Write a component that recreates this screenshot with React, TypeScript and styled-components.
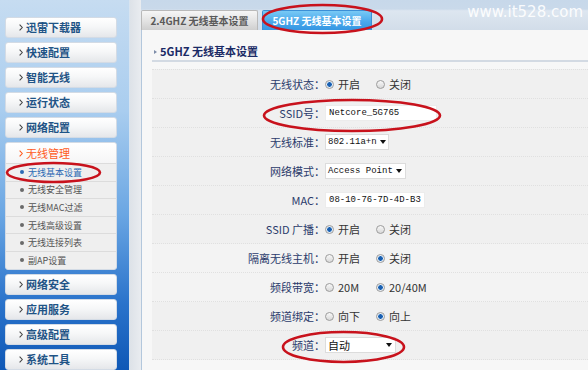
import styled, { createGlobalStyle } from "styled-components";

const CJK = `"Noto Sans CJK SC", "Liberation Sans", sans-serif`;
const MONO = `"Liberation Mono", "DejaVu Sans Mono", monospace`;

const GlobalStyle = createGlobalStyle`
  html, body { margin: 0; padding: 0; }
  body {
    width: 588px;
    height: 370px;
    overflow: hidden;
    background: #f7f7f7;
    font-family: ${CJK};
  }
`;

const Page = styled.div`
  position: relative;
  display: flex;
  width: 588px;
  height: 370px;
  overflow: hidden;
`;

const Sidebar = styled.nav`
  width: 130px;
  flex: none;
  box-sizing: border-box;
  padding: 17px 12px 0 5px;
  display: flex;
  flex-direction: column;
  gap: 4px;
  background: linear-gradient(#c6dcf1 0%, #a9cdef 30%, #6aa6e3 58%, #2a73cb 82%, #0f58b6 100%);
  border-right: 1px solid #d8e4f0;
`;

const MenuButton = styled.div`
  height: 21px;
  flex: none;
  box-sizing: border-box;
  display: flex;
  align-items: center;
  gap: 3px;
  padding-left: 13px;
  border: 1px solid #d3dbe5;
  border-radius: 3px;
  background: linear-gradient(#ffffff, #f6f7f8 45%, #e5e7ea);
  font: bold 11px/1 ${CJK};
  color: #1f5486;
`;

const Group = styled.div`
  flex: none;
  border: 1px solid #d3dbe5;
  border-radius: 3px;
  overflow: hidden;
  background: #efefef;
`;

const GroupHeader = styled.div`
  height: 20px;
  display: flex;
  align-items: center;
  gap: 3px;
  padding-left: 13px;
  background: linear-gradient(#ffffff, #f5f5f6);
  font: 11px/1 ${CJK};
  color: #ff5a1c;
`;

const SubItem = styled.div<{ $active?: boolean }>`
  height: 17.6px;
  box-sizing: border-box;
  display: flex;
  align-items: center;
  padding-left: 14px;
  border-top: 1px solid #dcdcdc;
  font: 9px/1 ${CJK};
  color: ${(p) => (p.$active ? "#2d6ab4" : "#555")};
  &::before {
    content: "";
    width: 4px;
    height: 4px;
    border-radius: 50%;
    margin-right: 4px;
    background: ${(p) => (p.$active ? "#2d6ab4" : "#6a6a6a")};
  }
`;

const Gutter = styled.div`
  width: 11px;
  flex: none;
  background: linear-gradient(to right, #dde2e8, #e9ecf0);
`;

const Main = styled.div`
  flex: 1;
  display: flex;
  flex-direction: column;
  min-width: 0;
`;

const TabBar = styled.div`
  height: 30px;
  flex: none;
  box-sizing: border-box;
  display: flex;
  align-items: flex-end;
  gap: 4px;
  background: linear-gradient(#c7d8ea 0%, #c9d9ea 30%, #dde6f0 36%, #d2dde9 100%);
`;

const Tab = styled.div<{ $active?: boolean }>`
  height: 20px;
  width: ${(p) => (p.$active ? "110px" : "117px")};
  box-sizing: border-box;
  display: flex;
  align-items: center;
  justify-content: center;
  border: 1px solid ${(p) => (p.$active ? "#3b8fd6" : "#b9b9b9")};
  border-bottom: none;
  border-radius: 2px 2px 0 0;
  background: ${(p) =>
    p.$active
      ? "linear-gradient(#78c9f5, #4aa8ec 55%, #3596e2)"
      : "linear-gradient(#f6f6f6, #e2e2e2 55%, #cfcfcf)"};
  font: bold 10px/1 ${CJK};
  color: ${(p) => (p.$active ? "#ffffff" : "#5a5a5a")};
`;

const Watermark = styled.div`
  position: absolute;
  top: 5px;
  right: 5px;
  font: 15px/1 "DejaVu Sans", sans-serif;
  color: rgba(255, 255, 255, 0.92);
`;

const Panel = styled.div`
  flex: 1;
  box-sizing: border-box;
  padding-left: 10px;
  border-left: 1px solid #b3c7dc;
  background: #f7f7f7;
`;

const Title = styled.div`
  margin-top: 13px;
  height: 17px;
  display: flex;
  align-items: center;
  gap: 3px;
  padding-left: 2px;
  border-bottom: 2px solid #d3dae3;
  font: bold 11px/1 ${CJK};
  color: #1b2b66;
  &::before {
    content: "";
    border-left: 3px solid #7d8ca8;
    border-top: 2.5px solid transparent;
    border-bottom: 2.5px solid transparent;
  }
`;

const Form = styled.div`
  margin-top: 7px;
  border-top: 1px dotted #e0e0e0;
  background: #f0f0f0;
`;

const Row = styled.div<{ $light?: boolean }>`
  height: 29px;
  box-sizing: border-box;
  display: flex;
  align-items: center;
  border-bottom: 1px dotted #e0e0e0;
  background: ${(p) => (p.$light ? "#f3f3f3" : "transparent")};
`;

const Label = styled.div`
  width: 173px;
  flex: none;
  text-align: right;
  font: 11px/1 ${CJK};
  color: #2b3b6b;
`;

const Option = styled.div`
  width: 51px;
  display: flex;
  align-items: center;
  gap: 4px;
  font: 11px/1 ${CJK};
  color: #333;
`;

const Radio = styled.span<{ $on?: boolean }>`
  width: 9px;
  height: 9px;
  flex: none;
  box-sizing: border-box;
  border-radius: 50%;
  border: 1px solid #9c9c9c;
  background: ${(p) =>
    p.$on
      ? "radial-gradient(circle, #1a5fb0 0 2px, #7fb0e0 2.3px, #e9eef4 3px)"
      : "linear-gradient(#f8f8f8, #d8d8d8)"};
`;

const TextBox = styled.div<{ $w: number }>`
  width: ${(p) => p.$w}px;
  height: 16px;
  box-sizing: border-box;
  display: flex;
  align-items: center;
  padding-left: 3px;
  background: #ffffff;
  border: 1px solid #ececec;
  font: 9px/1 ${MONO};
  color: #111;
`;

const Select = styled.div<{ $w: number; $cjk?: boolean }>`
  width: ${(p) => p.$w}px;
  height: 16px;
  box-sizing: border-box;
  display: flex;
  align-items: center;
  justify-content: space-between;
  gap: 3px;
  padding: 0 3px 0 2px;
  background: #ffffff;
  border: 1px solid #dcdcdc;
  font: ${(p) => (p.$cjk ? `11px/1 ${CJK}` : `9px/1 ${MONO}`)};
  color: #111;
  white-space: nowrap;
  &::after {
    content: "";
    flex: none;
    border-top: 4px solid #111;
    border-left: 3px solid transparent;
    border-right: 3px solid transparent;
  }
`;

const Marks = styled.svg`
  position: absolute;
  inset: 0;
  pointer-events: none;
`;

const Chevron = ({ color }: { color: string }) => (
  <svg width="4" height="7" viewBox="0 0 4 7">
    <path d="M0.6 0.6 L3.3 3.5 L0.6 6.4" fill="none" stroke={color} strokeWidth="1.1" />
  </svg>
);

const topItems = ["迅雷下载器", "快速配置", "智能无线", "运行状态", "网络配置"];
const subItems = ["无线基本设置", "无线安全管理", "无线MAC过滤", "无线高级设置", "无线连接列表", "副AP设置"];
const bottomItems = ["网络安全", "应用服务", "高级配置", "系统工具"];

const RadioRow = ({ label, a, b, on, light }: { label: string; a: string; b: string; on: 0 | 1; light?: boolean }) => (
  <Row $light={light}>
    <Label>{label}：</Label>
    <Option>
      <Radio $on={on === 0} />
      {a}
    </Option>
    <Option>
      <Radio $on={on === 1} />
      {b}
    </Option>
  </Row>
);

export default function App() {
  return (
    <>
      <GlobalStyle />
      <Page>
        <Sidebar>
          {topItems.map((t) => (
            <MenuButton key={t}>
              <Chevron color="#444" />
              {t}
            </MenuButton>
          ))}
          <Group>
            <GroupHeader>
              <Chevron color="#ff5a1c" />
              无线管理
            </GroupHeader>
            {subItems.map((t, i) => (
              <SubItem key={t} $active={i === 0}>
                {t}
              </SubItem>
            ))}
          </Group>
          {bottomItems.map((t) => (
            <MenuButton key={t}>
              <Chevron color="#444" />
              {t}
            </MenuButton>
          ))}
        </Sidebar>
        <Gutter />
        <Main>
          <TabBar>
            <Tab>2.4GHZ 无线基本设置</Tab>
            <Tab $active>5GHZ 无线基本设置</Tab>
          </TabBar>
          <Panel>
            <Title>5GHZ 无线基本设置</Title>
            <Form>
              <RadioRow label="无线状态" a="开启" b="关闭" on={0} />
              <Row>
                <Label>SSID号：</Label>
                <TextBox $w={112}>Netcore_5G765</TextBox>
              </Row>
              <Row>
                <Label>无线标准：</Label>
                <Select $w={64}>802.11a+n</Select>
              </Row>
              <Row>
                <Label>网络模式：</Label>
                <Select $w={81}>Access Point</Select>
              </Row>
              <Row>
                <Label>MAC：</Label>
                <TextBox $w={100}>08-10-76-7D-4D-B3</TextBox>
              </Row>
              <RadioRow label="SSID 广播" a="开启" b="关闭" on={0} />
              <RadioRow label="隔离无线主机" a="开启" b="关闭" on={1} light />
              <RadioRow label="频段带宽" a="20M" b="20/40M" on={1} light />
              <RadioRow label="频道绑定" a="向下" b="向上" on={1} />
              <Row>
                <Label>频道：</Label>
                <Select $w={71} $cjk>
                  自动
                </Select>
              </Row>
            </Form>
          </Panel>
        </Main>
        <Watermark>www.it528.com</Watermark>
        <Marks width="588" height="370" viewBox="0 0 588 370">
          <g fill="none" stroke="#c8121c" strokeWidth="2.6">
            <ellipse cx="322.5" cy="19" rx="59.5" ry="14" />
            <ellipse cx="53.5" cy="172.5" rx="46.5" ry="9.5" />
            <ellipse cx="352" cy="115.5" rx="88" ry="15.5" />
            <ellipse cx="343.5" cy="347" rx="60.5" ry="15" />
          </g>
        </Marks>
      </Page>
    </>
  );
}
